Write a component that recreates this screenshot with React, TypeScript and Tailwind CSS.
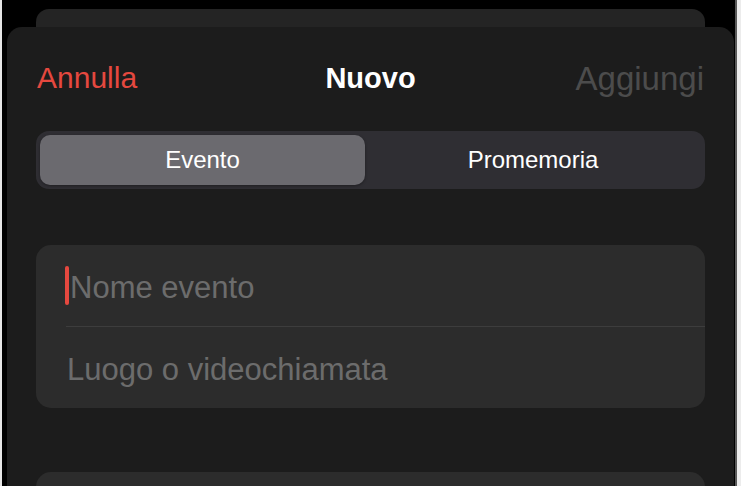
import React from "react";

const font = { fontFamily: '"Liberation Sans", Arial, sans-serif' };

const Segmented = () => {
  return (
    <div className="mt-[33px] h-[58px] rounded-[13px] bg-[#2f2e33] p-[4px] flex">
      <div className="w-[325px] h-full rounded-[10px] bg-[#6b6a6f] flex items-center justify-center text-[24px] text-white shadow-[0_1px_3px_rgba(0,0,0,0.35)]">
        Evento
      </div>
      <div className="flex-1 h-full flex items-center justify-center text-[24px] text-white">
        Promemoria
      </div>
    </div>
  );
};

const EventCard = () => {
  return (
    <div className="mt-[56px] rounded-[15px] bg-[#2c2c2c] flex flex-col">
      <div className="h-[81px] pl-[29px] flex items-center">
        <span className="w-[4px] h-[39px] rounded-full bg-[#e5483f]" />
        <span className="ml-px pt-[4px] text-[31px] text-[#6c6c6c] leading-none">Nome evento</span>
      </div>
      <div className="ml-[30px] h-px bg-[#3d3d3d]" />
      <div className="h-[81px] pl-[31px] pt-[3px] flex items-center">
        <span className="text-[31px] text-[#6c6c6c] leading-none">Luogo o videochiamata</span>
      </div>
    </div>
  );
};

export default function App() {
  return (
    <div className="w-[741px] h-[486px] overflow-hidden bg-black flex" style={font}>
      <div className="w-[2px] bg-[#e6e6e6]" />
      <div className="flex-1 flex flex-col pl-[5px] pr-[1px]">
        <div className="mx-[29px] mt-[9px] h-[18px] rounded-t-[13px] bg-[#242424] shrink-0" />
        <div className="flex-1 rounded-t-[15px] bg-[#1c1c1c] px-[29px] pt-[31px] flex flex-col">
          <div className="h-[40px] grid grid-cols-[1fr_auto_1fr] items-center">
            <span className="text-[30px] text-[#e5483f] leading-none pl-px">Annulla</span>
            <span className="text-[29px] font-bold text-white leading-none">Nuovo</span>
            <span className="text-[33px] text-[#4c4c4c] leading-none pr-px justify-self-end">Aggiungi</span>
          </div>
          <Segmented />
          <EventCard />
          <div className="mt-[64px] h-[60px] rounded-[15px] bg-[#2c2c2c] shrink-0" />
        </div>
      </div>
      <div className="w-[2px] bg-[#5a5a5a]" />
      <div className="w-[4px] bg-[#ececec]" />
    </div>
  );
}
